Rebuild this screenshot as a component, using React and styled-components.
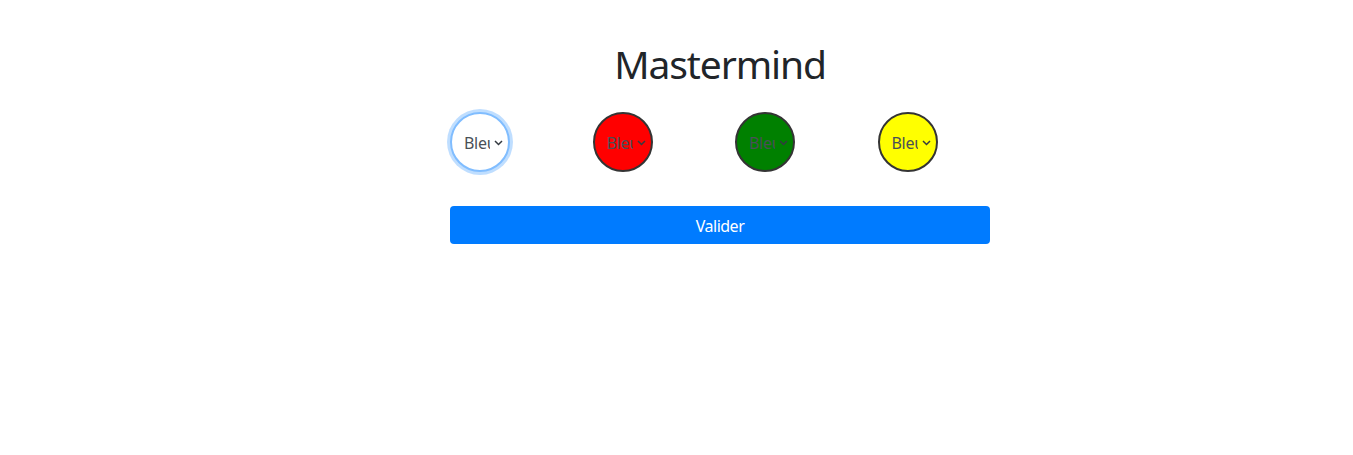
import styled, { createGlobalStyle } from 'styled-components';

const GlobalStyle = createGlobalStyle`
  body {
    margin: 0;
    background: #fff;
    font-family: "Noto Sans", "Open Sans", sans-serif;
    color: #212529;
  }
`;

// Page wrapper, content column sits slightly right of page center
const Page = styled.div`
  padding-top: 40px;
`;

const Container = styled.div`
  width: 540px;
  margin-left: 450px;
`;

const Title = styled.h1`
  margin: 0 0 24px;
  font-size: 39px;
  font-weight: 400;
  letter-spacing: -1.1px;
  line-height: 48px;
  text-align: center;
  color: #212529;
`;

const PegRow = styled.div`
  display: grid;
  grid-template-columns: repeat(4, 1fr);
  margin: 0 -15px;
`;

const PegCell = styled.div`
  padding: 0 15px;
`;

const PegWrap = styled.div`
  position: relative;
  width: 60px;
  height: 60px;
`;

const PegSelect = styled.select`
  appearance: none;
  width: 60px;
  height: 60px;
  border-radius: 50%;
  box-sizing: border-box;
  border: 2px solid ${(p) => (p.$focused ? '#80bdff' : '#343434')};
  box-shadow: ${(p) => (p.$focused ? '0 0 0 3px rgba(0, 123, 255, 0.25)' : 'none')};
  background: ${(p) => p.$color};
  color: #495057;
  font-family: "Noto Sans", "Open Sans", sans-serif;
  font-size: 16px;
  letter-spacing: -0.3px;
  padding: 2px 18px 0 12px;
  outline: none;
  cursor: pointer;
`;

const Chevron = styled.svg`
  position: absolute;
  top: 28px;
  right: 7px;
  pointer-events: none;
`;

const SubmitButton = styled.button`
  display: block;
  width: 100%;
  height: 38px;
  margin-top: 34px;
  padding-top: 2px;
  border: none;
  border-radius: 4px;
  background: #007bff;
  color: #fff;
  font-family: "Noto Sans", "Open Sans", sans-serif;
  font-size: 16px;
  letter-spacing: -0.5px;
  cursor: pointer;
`;

const pegs = [
  { color: '#ffffff', focused: true },
  { color: '#ff0000' },
  { color: '#008000' },
  { color: '#ffff00' },
];

function Peg({ color, focused }) {
  return (
    <PegWrap>
      <PegSelect $color={color} $focused={focused} defaultValue="bleu">
        <option value="bleu">Bleu</option>
        <option value="rouge">Rouge</option>
        <option value="vert">Vert</option>
        <option value="jaune">Jaune</option>
      </PegSelect>
      <Chevron width="9" height="6" viewBox="0 0 9 6">
        <polyline points="1,1 4.5,4.5 8,1" fill="none" stroke="#343a40" strokeWidth="1.5" />
      </Chevron>
    </PegWrap>
  );
}

export default function App() {
  return (
    <>
      <GlobalStyle />
      <Page>
        <Container>
          <Title>Mastermind</Title>
          <PegRow>
            {pegs.map((p, i) => (
              <PegCell key={i}>
                <Peg color={p.color} focused={p.focused} />
              </PegCell>
            ))}
          </PegRow>
          <SubmitButton>Valider</SubmitButton>
        </Container>
      </Page>
    </>
  );
}
